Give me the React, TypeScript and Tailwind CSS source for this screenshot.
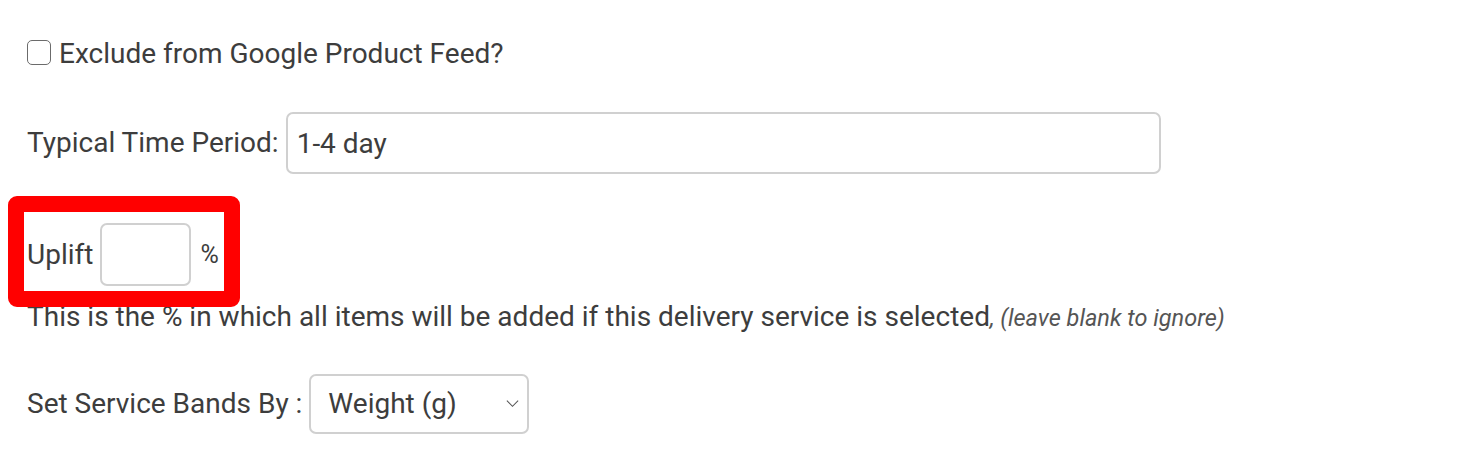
import React from "react";

export default function App() {
  return (
    <div className="w-[1472px] h-[470px] bg-white text-[#3d3d3d] font-['Roboto',sans-serif] text-[28px] pl-[27px] pt-[39px]">
      <label className="flex items-center h-[26px]">
        <input
          type="checkbox"
          className="appearance-none w-[24px] h-[25px] border-[1.5px] border-[#6b6b6b] rounded-[5px] bg-white"
        />
        <span className="ml-[8px] leading-none mt-[3px]">Exclude from Google Product Feed?</span>
      </label>

      <div className="flex items-center mt-[47px]">
        <span>Typical Time Period:</span>
        <input
          type="text"
          defaultValue="1-4 day"
          className="ml-[7px] w-[875px] h-[62px] border-2 border-[#d0d0d0] rounded-[7px] px-[9px] text-[28px] text-[#3d3d3d] outline-none"
        />
      </div>

      <div className="relative flex items-center mt-[49px] h-[63px]">
        <span>Uplift</span>
        <input
          type="text"
          className="ml-[7px] w-[91px] h-[63px] border-2 border-[#d0d0d0] rounded-[7px] outline-none"
        />
        <span className="ml-[9px] text-[25px]">%</span>
        <div className="absolute left-[-19px] top-[-27px] w-[232px] h-[111px] border-[16px] border-[#ff0000] rounded-[9px] pointer-events-none" />
      </div>

      <div className="mt-[16px] leading-[30px] whitespace-nowrap">
        This is the % in which all items will be added if this delivery service is selected
        <span className="italic text-[23.5px] text-[#555]">, (leave blank to ignore)</span>
      </div>

      <div className="flex items-center mt-[41px]">
        <span>Set Service Bands By :</span>
        <div className="relative ml-[7px]">
          <select className="appearance-none w-[220px] h-[60px] border-2 border-[#d0d0d0] rounded-[7px] pl-[17px] bg-white text-[28px] text-[#3d3d3d] outline-none">
            <option>Weight (g)</option>
          </select>
          <svg
            viewBox="0 0 16 16"
            className="absolute right-[9px] top-[22px] w-[15px] h-[15px] pointer-events-none"
            fill="none"
            stroke="#555"
            strokeWidth="1.1"
          >
            <path d="M2 5l6 6 6-6" />
          </svg>
        </div>
      </div>
    </div>
  );
}
